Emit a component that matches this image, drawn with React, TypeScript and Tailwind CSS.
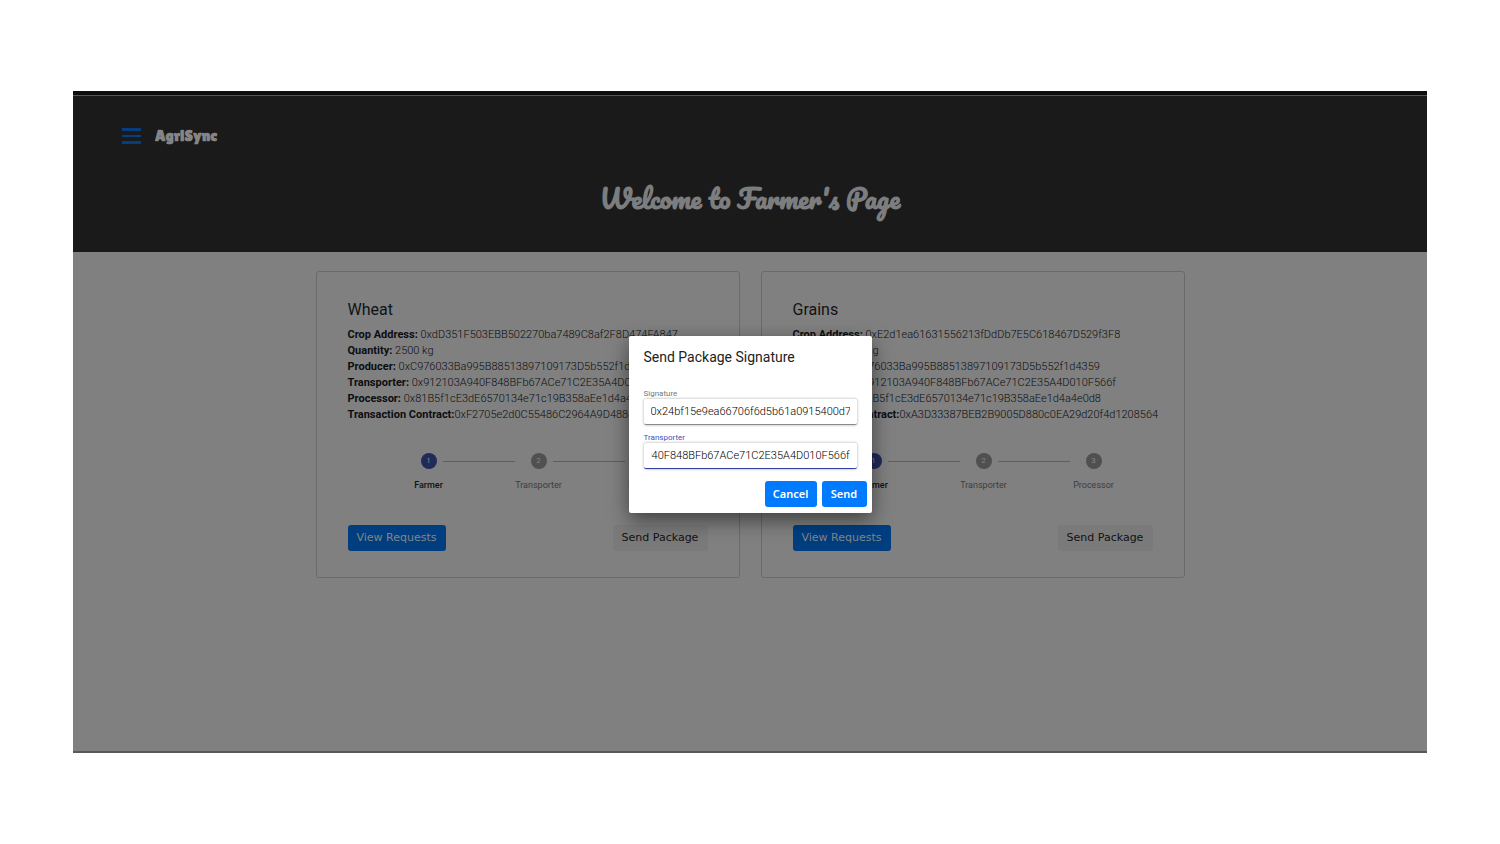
import { useEffect, useRef } from "react";

type Crop = {
  name: string;
  details: [string, string][];
};

const crops: Crop[] = [
  {
    name: "Wheat",
    details: [
      ["Crop Address: ", "0xdD351F503EBB502270ba7489C8af2F8D474FA847"],
      ["Quantity: ", "2500 kg"],
      ["Producer: ", "0xC976033Ba995B88513897109173D5b552f1d4359"],
      ["Transporter: ", "0x912103A940F848BFb67ACe71C2E35A4D010F566f"],
      ["Processor: ", "0x81B5f1cE3dE6570134e71c19B358aEe1d4a4e0d8"],
      ["Transaction Contract:", "0xF2705e2d0C55486C2964A9D488c0"],
    ],
  },
  {
    name: "Grains",
    details: [
      ["Crop Address: ", "0xE2d1ea61631556213fDdDb7E5C618467D529f3F8"],
      ["Quantity: ", "2500 kg"],
      ["Producer: ", "0xC976033Ba995B88513897109173D5b552f1d4359"],
      ["Transporter: ", "0x912103A940F848BFb67ACe71C2E35A4D010F566f"],
      ["Processor: ", "0x81B5f1cE3dE6570134e71c19B358aEe1d4a4e0d8"],
      ["Transaction Contract:", "0xA3D33387BEB2B9005D880c0EA29d20f4d1208564"],
    ],
  },
];

const steps = ["Farmer", "Transporter", "Processor"];

function Stepper() {
  return (
    <ol className="mt-[30px] grid grid-cols-3 pr-1 pl-[26px]">
      {steps.map((step, i) => (
        <li key={step}>
          <div className="grid grid-cols-[1fr_16px_1fr] items-center">
            {i > 0 ? <span className="mr-4 h-px bg-[#5f5f5f]" /> : <span />}
            <span
              className={
                i === 0
                  ? "flex size-4 items-center justify-center rounded-full bg-[#202a5b] text-[8px] text-[#858585]"
                  : "flex size-4 items-center justify-center rounded-full bg-[#505050] text-[8px] text-[#858585]"
              }
            >
              {i + 1}
            </span>
            {i < 2 ? <span className="ml-1.5 h-px bg-[#5f5f5f]" /> : <span />}
          </div>
          <p
            className={
              i === 0
                ? "mt-2 text-center text-[9px] leading-4 font-medium text-[#111]"
                : "mt-2 text-center text-[9px] leading-4 text-[#3d3d3d]"
            }
          >
            {step}
          </p>
        </li>
      ))}
    </ol>
  );
}

function CropCard({ crop }: { crop: Crop }) {
  return (
    <article className="min-w-0 rounded-[3px] border border-[#6a6a6a] px-[31px] pt-7 pb-[26px]">
      <h2 className="text-[16px] leading-5 text-[#111315]">{crop.name}</h2>
      <dl className="mt-[7px] text-[11px] leading-4 text-[#0c0e10]">
        {crop.details.map(([label, value]) => (
          <div key={label} className="whitespace-pre">
            <dt className="inline font-bold">{label}</dt>
            <dd className="inline font-light">{value}</dd>
          </div>
        ))}
      </dl>
      <Stepper />
      <div className="mt-8 flex justify-between font-['DejaVu_Sans',sans-serif] text-[11px]">
        <button className="h-[26px] w-[98px] rounded-[3px] bg-[#003e80] whitespace-nowrap text-[#858585]">
          View Requests
        </button>
        <button className="h-[26px] w-[95px] rounded-[3px] bg-[#7a7a7a] whitespace-nowrap text-[#101214]">
          Send Package
        </button>
      </div>
    </article>
  );
}

function SendDialog() {
  const transporter = useRef<HTMLInputElement>(null);

  useEffect(() => {
    const field = transporter.current;
    if (field) field.scrollLeft = field.scrollWidth;
  }, []);

  return (
    <div
      role="dialog"
      aria-labelledby="dialog-title"
      className="w-[243px] rounded-[2px] bg-white px-[15px] pt-3 pb-1.5 shadow-[0_7px_20px_rgba(0,0,0,0.5)]"
    >
      <h2 id="dialog-title" className="text-[14px] leading-[18px] text-[#222]">
        Send Package Signature
      </h2>
      <label htmlFor="signature" className="mt-[23px] block text-[8px] leading-[10px] text-[#777]">
        Signature
      </label>
      <div className="rounded-[2px] border-b border-[#8a8a8a] px-[7px] shadow-[0_0_3px_rgba(0,0,0,0.35)]">
        <input
          id="signature"
          defaultValue="0x24bf15e9ea66706f6d5b61a0915400d7"
          className="block h-[25px] w-full bg-white text-[11px] font-light text-black outline-none"
        />
      </div>
      <label htmlFor="transporter" className="mt-2 block text-[8px] leading-[10px] text-[#3f51b5]">
        Transporter
      </label>
      <div className="rounded-[2px] border-b border-[#303f9f] px-[7px] shadow-[0_0_3px_rgba(0,0,0,0.35)]">
        <input
          id="transporter"
          ref={transporter}
          defaultValue="0x912103A940F848BFb67ACe71C2E35A4D010F566f"
          className="block h-[25px] w-full bg-white text-[11px] font-light text-black outline-none"
        />
      </div>
      <div className="mt-3 -mr-2.5 flex justify-end gap-[5px] font-['Noto_Sans',sans-serif] text-[11px] font-semibold text-white">
        <button className="h-[26px] w-[52px] rounded-[3px] bg-[#007bff]">Cancel</button>
        <button className="h-[26px] w-[45px] rounded-[3px] bg-[#007bff]">Send</button>
      </div>
    </div>
  );
}

export default function App() {
  return (
    <div className="flex min-h-screen flex-col bg-white px-[73px] py-[91px] font-[Roboto,sans-serif]">
      <div className="h-[5px] border-b border-[#555] bg-[#0d0d0d]" />
      <div className="relative flex grow flex-col border-b-2 border-[#595959] bg-[#808080]">
        <header className="h-[156px] bg-[#1a1a1a] pt-[29px]">
          <nav className="flex items-center gap-3.5 pl-[49px]">
            <button aria-label="Menu">
              <svg width="19" height="18" viewBox="0 0 19 18" fill="#063e7d">
                <path d="M0 1h19v3H0zM0 8h19v2H0zM0 14h19v3H0z" />
              </svg>
            </button>
            <a
              href="#"
              className="font-['Lilita_One',Inter,sans-serif] text-[16px] leading-[22px] font-bold text-[#858585]"
            >
              AgriSync
            </a>
          </nav>
          <h1 className="mt-[33px] text-center font-['Pacifico','Liberation_Serif',serif] text-[26px] leading-9 font-bold text-[#7c7d7e]">
            Welcome to Farmer's Page
          </h1>
        </header>
        <main className="mx-auto mt-[19px] grid w-full max-w-[869px] grid-cols-2 gap-[21px]">
          {crops.map((crop) => (
            <CropCard key={crop.name} crop={crop} />
          ))}
        </main>
        <div className="absolute inset-0 flex items-center justify-center pt-0.5">
          <SendDialog />
        </div>
      </div>
    </div>
  );
}
